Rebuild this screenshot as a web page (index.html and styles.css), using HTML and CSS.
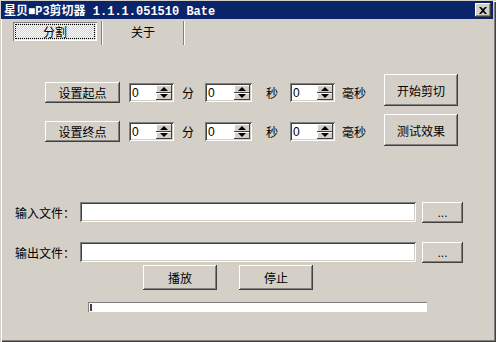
FILE: index.html
```html
<!DOCTYPE html>
<html>
<head>
<meta charset="utf-8">
<link rel="stylesheet" href="styles.css">
</head>
<body>
<div class="window">
  <div class="titlebar">
    <span class="title">星贝■P3剪切器 1.1.1.051510 Bate</span>
    <button class="close"><svg width="8" height="7" viewBox="0 0 8 7"><path d="M0 0h2l2 2 2-2h2L5 3.5 8 7H6L4 5 2 7H0l3-3.5z" fill="#000"/></svg></button>
  </div>
  <div class="toolbar">
    <div class="tab active"><span class="focus">分割</span></div>
    <div class="sep"></div>
    <div class="tab">关于</div>
    <div class="sep"></div>
  </div>
  <div class="time">
    <div class="rows">
      <div class="row">
        <button class="btn setbtn">设置起点</button>
        <div class="spin s1"><span class="val">0</span><span class="arrows"><span class="up"></span><span class="down"></span></span></div>
        <span class="lbl l1">分</span>
        <div class="spin s2"><span class="val">0</span><span class="arrows"><span class="up"></span><span class="down"></span></span></div>
        <span class="lbl l2">秒</span>
        <div class="spin s3"><span class="val">0</span><span class="arrows"><span class="up"></span><span class="down"></span></span></div>
        <span class="lbl l3">毫秒</span>
      </div>
      <div class="row">
        <button class="btn setbtn">设置终点</button>
        <div class="spin s1"><span class="val">0</span><span class="arrows"><span class="up"></span><span class="down"></span></span></div>
        <span class="lbl l1">分</span>
        <div class="spin s2"><span class="val">0</span><span class="arrows"><span class="up"></span><span class="down"></span></span></div>
        <span class="lbl l2">秒</span>
        <div class="spin s3"><span class="val">0</span><span class="arrows"><span class="up"></span><span class="down"></span></span></div>
        <span class="lbl l3">毫秒</span>
      </div>
    </div>
    <div class="actions">
      <button class="btn big">开始剪切</button>
      <button class="btn big">测试效果</button>
    </div>
  </div>
  <div class="filerow first">
    <span class="flabel">输入文件：</span>
    <div class="field text"></div>
    <button class="btn dots">...</button>
  </div>
  <div class="filerow second">
    <span class="flabel">输出文件：</span>
    <div class="field text"></div>
    <button class="btn dots">...</button>
  </div>
  <div class="playrow">
    <button class="btn play">播放</button>
    <button class="btn play">停止</button>
  </div>
  <div class="progress"><span class="chunk"></span></div>
</div>
</body>
</html>
```
FILE: styles.css
```css
* { box-sizing: border-box; }
html, body { margin: 0; padding: 0; }
body {
  width: 496px;
  height: 342px;
  overflow: hidden;
  background: #d4d0c8;
  color: #000;
  font: 12px "Noto Sans CJK SC", "Liberation Sans", sans-serif;
}
button {
  font: inherit;
  color: inherit;
  margin: 0;
  padding: 0;
  border: 0;
  background: #d4d0c8;
}
.window {
  width: 496px;
  height: 342px;
  padding: 1px 3px 2px 1px;
  display: flex;
  flex-direction: column;
  box-shadow: inset 1px 1px #d4d0c8, inset 2px 2px #fff, inset -1px -1px #404040, inset -2px -2px #808080;
}
.titlebar {
  height: 18px;
  background: #0a246a;
  display: flex;
  align-items: center;
  padding: 0 2px 0 3px;
}
.title {
  color: #fff;
  font: bold 12px "Liberation Mono", "Noto Sans CJK SC", monospace;
  white-space: nowrap;
}
.close {
  margin-left: auto;
  width: 16px;
  height: 14px;
  display: flex;
  align-items: center;
  justify-content: center;
  box-shadow: inset -1px -1px #404040, inset 1px 1px #fff, inset -2px -2px #808080;
}
.toolbar {
  height: 27px;
  padding: 3px 0 0 12px;
  display: flex;
  align-items: flex-start;
}
.tab {
  width: 80px;
  height: 19px;
  display: flex;
  align-items: center;
  justify-content: center;
}
.tab.active {
  width: 84px;
  margin-right: 4px;
  padding: 2px;
  background: repeating-conic-gradient(#fff 0 25%, #d4d0c8 0 50%) 0 0 / 2px 2px;
  box-shadow: inset 1px 1px #808080, inset -1px -1px #fff;
}
.focus {
  flex: 1;
  align-self: stretch;
  display: flex;
  align-items: center;
  justify-content: center;
  border: 1px dotted #000;
}
.sep {
  width: 2px;
  height: 24px;
  margin-top: -1px;
  border-left: 1px solid #808080;
  border-right: 1px solid #fff;
}
.time {
  display: flex;
  margin-top: 28px;
}
.rows {
  padding-left: 44px;
  padding-top: 8px;
  display: flex;
  flex-direction: column;
  gap: 18px;
}
.row {
  display: flex;
  align-items: center;
  height: 21px;
}
.btn {
  box-shadow: inset -1px -1px #404040, inset 1px 1px #fff, inset -2px -2px #808080;
  display: flex;
  align-items: center;
  justify-content: center;
}
.setbtn {
  width: 75px;
  height: 21px;
  margin-right: 9px;
}
.spin {
  width: 45px;
  height: 19px;
  background: #fff;
  box-shadow: inset 1px 1px #808080, inset -1px -1px #fff, inset 2px 2px #404040, inset -2px -2px #d4d0c8;
  display: flex;
  align-items: center;
  padding: 2px;
}
.s2 { width: 47px; }
.val {
  flex: 1;
  font: 12px "Liberation Sans", sans-serif;
  padding-left: 1px;
}
.arrows {
  width: 16px;
  height: 15px;
  display: flex;
  flex-direction: column;
}
.up, .down {
  flex: 1;
  background: #d4d0c8;
  box-shadow: inset -1px -1px #404040, inset 1px 1px #fff;
  display: flex;
  align-items: center;
  justify-content: center;
}
.up::before {
  content: "";
  border-left: 4px solid transparent;
  border-right: 4px solid transparent;
  border-bottom: 4px solid #000;
}
.down::before {
  content: "";
  border-left: 4px solid transparent;
  border-right: 4px solid transparent;
  border-top: 4px solid #000;
}
.lbl { white-space: nowrap; }
.l1 { margin: 0 11px 0 8px; }
.l2 { margin: 0 12px 0 14px; }
.l3 { margin-left: 7px; }
.actions {
  margin-left: auto;
  margin-right: 35px;
  display: flex;
  flex-direction: column;
  gap: 8px;
}
.big {
  width: 74px;
  height: 32px;
}
.filerow {
  display: flex;
  align-items: flex-start;
  height: 21px;
}
.filerow.first { margin-top: 56px; }
.filerow.second { margin-top: 19px; }
.flabel {
  width: 79px;
  padding-left: 14px;
  height: 20px;
  display: flex;
  align-items: center;
  white-space: nowrap;
}
.field {
  background: #fff;
  box-shadow: inset 1px 1px #808080, inset -1px -1px #fff, inset 2px 2px #404040, inset -2px -2px #d4d0c8;
}
.text {
  width: 336px;
  height: 20px;
  margin-right: 6px;
}
.dots {
  width: 41px;
  height: 21px;
  align-items: flex-end;
  padding-bottom: 3px;
  line-height: 1;
  font: 12px "Liberation Sans", sans-serif;
}
.playrow {
  display: flex;
  gap: 22px;
  padding-left: 142px;
  margin-top: 2px;
}
.play {
  width: 74px;
  height: 25px;
}
.progress {
  margin: 12px 0 0 87px;
  width: 339px;
  height: 10px;
  background: #fff;
  box-shadow: inset 1px 1px #808080, inset -1px -1px #fff;
  padding: 2px 0 1px 2px;
  display: flex;
}
.chunk {
  width: 2px;
  background: #404040;
}
```
